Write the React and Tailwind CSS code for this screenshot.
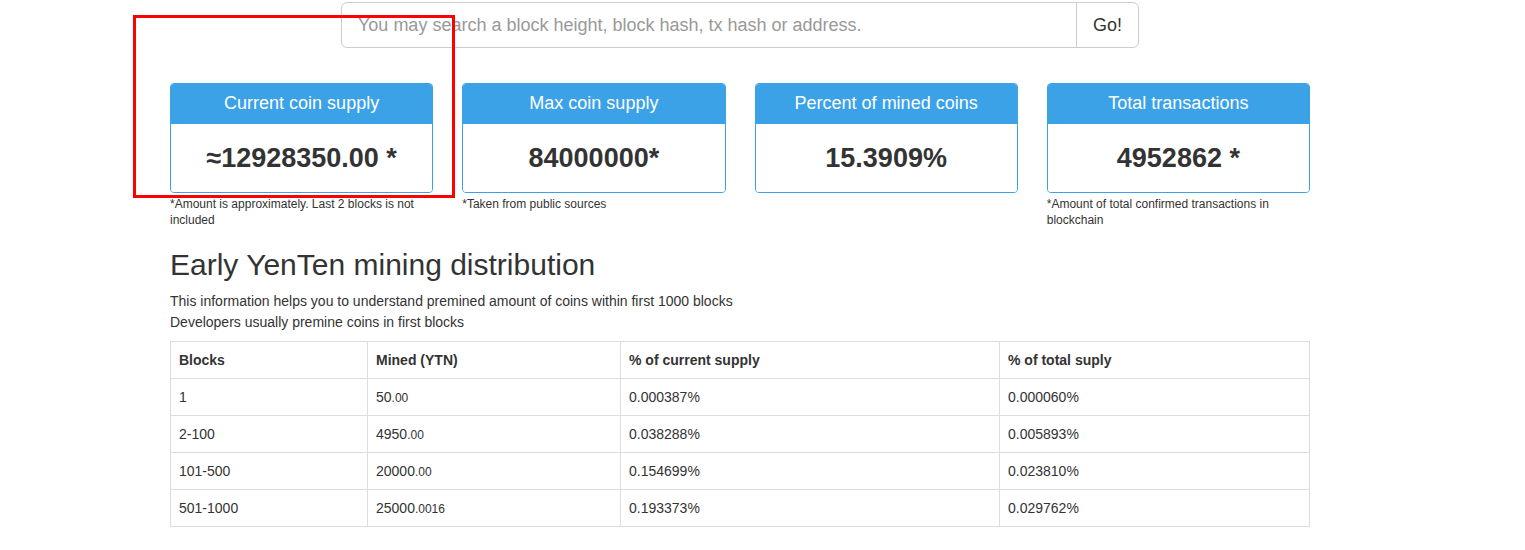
import React from "react";

const cards = [
  { title: "Current coin supply", value: "≈12928350.00 *", note: "*Amount is approximately. Last 2 blocks is not included" },
  { title: "Max coin supply", value: "84000000*", note: "*Taken from public sources" },
  { title: "Percent of mined coins", value: "15.3909%", note: "" },
  { title: "Total transactions", value: "4952862 *", note: "*Amount of total confirmed transactions in blockchain" },
];

const rows = [
  { blocks: "1", whole: "50", dec: ".00", cur: "0.000387%", total: "0.000060%" },
  { blocks: "2-100", whole: "4950", dec: ".00", cur: "0.038288%", total: "0.005893%" },
  { blocks: "101-500", whole: "20000", dec: ".00", cur: "0.154699%", total: "0.023810%" },
  { blocks: "501-1000", whole: "25000", dec: ".0016", cur: "0.193373%", total: "0.029762%" },
];

const StatCard = ({ title, value, note }) => (
  <div>
    <div className="rounded-[4px] border border-[#3ba2e8] overflow-hidden">
      <div className="h-[40px] pb-[2px] bg-[#3ba2e8] text-white text-[18px] flex items-center justify-center">
        {title}
      </div>
      <div className="h-[68px] bg-white flex items-center justify-center text-[27px] font-bold text-[#333]">
        {value}
      </div>
    </div>
    {note && (
      <p className="mt-[3px] text-[12px] leading-[16px] text-[#333]">{note}</p>
    )}
  </div>
);

export default function App() {
  return (
    <div
      className="relative w-[1525px] h-[550px] bg-white text-[#333] overflow-hidden"
      style={{ fontFamily: '"Liberation Sans", Arial, sans-serif' }}
    >
      <div className="ml-[170px] w-[1140px] pt-[2px]">
        {/* search */}
        <div className="mx-auto w-[798px] h-[46px] flex border border-[#ccc] rounded-[6px] overflow-hidden">
          <div className="flex-1 flex items-center pl-[16px] text-[18px] text-[#999]">
            You may search a block height, block hash, tx hash or address.
          </div>
          <div className="w-[62px] border-l border-[#ccc] flex items-center justify-center text-[18px] text-[#333]">
            Go!
          </div>
        </div>

        {/* stat cards */}
        <div className="mt-[35px] grid grid-cols-4 gap-[29px] items-start">
          {cards.map((c) => (
            <StatCard key={c.title} {...c} />
          ))}
        </div>

        <h2 className="mt-[20px] text-[30px] leading-[33px] font-normal">Early YenTen mining distribution</h2>
        <p className="mt-[10px] text-[14px] leading-[21px]">
          This information helps you to understand premined amount of coins within first 1000 blocks
          <br />
          Developers usually premine coins in first blocks
        </p>

        <table className="mt-[8px] w-[1140px] border-collapse border border-[#ddd] text-[14px] leading-[20px] table-fixed">
          <thead>
            <tr className="text-left">
              <th className="w-[197px] border border-[#ddd] p-[8px] font-bold">Blocks</th>
              <th className="w-[253px] border border-[#ddd] p-[8px] font-bold">Mined (YTN)</th>
              <th className="w-[379px] border border-[#ddd] p-[8px] font-bold">% of current supply</th>
              <th className="border border-[#ddd] p-[8px] font-bold">% of total suply</th>
            </tr>
          </thead>
          <tbody>
            {rows.map((r) => (
              <tr key={r.blocks}>
                <td className="border border-[#ddd] p-[8px]">{r.blocks}</td>
                <td className="border border-[#ddd] p-[8px]">
                  {r.whole}
                  <span className="text-[12px] leading-none">{r.dec}</span>
                </td>
                <td className="border border-[#ddd] p-[8px]">{r.cur}</td>
                <td className="border border-[#ddd] p-[8px]">{r.total}</td>
              </tr>
            ))}
          </tbody>
        </table>
      </div>

      {/* annotation box */}
      <div className="absolute left-[133px] top-[15px] w-[322px] h-[183px] border-[3px] border-[#ff0000]" />
    </div>
  );
}
